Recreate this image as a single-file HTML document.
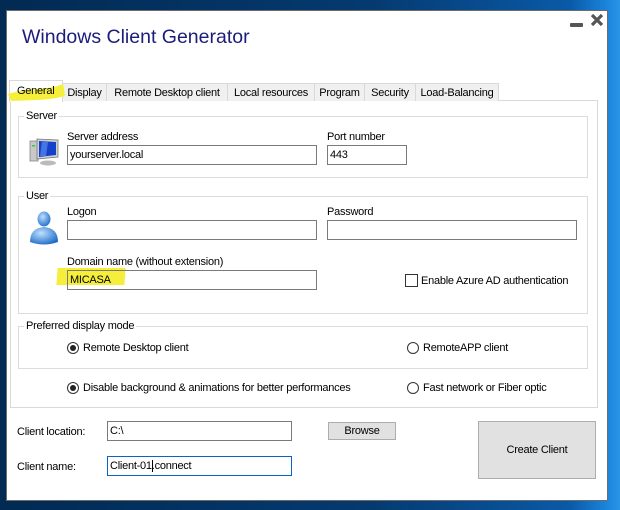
<!DOCTYPE html>
<html><head><meta charset="utf-8"><style>
*{margin:0;padding:0;box-sizing:border-box}
body{width:620px;height:510px;overflow:hidden;position:relative;font-family:"Liberation Sans",sans-serif;font-size:11px;letter-spacing:-0.25px;color:#000;
background:linear-gradient(90deg,#022a52 0%,#053a70 60%,#0a5aa8 92%,#1a86dc 98%,#2a94e6 100%);}
.a{position:absolute}
.win{left:6px;top:10px;width:602px;height:491px;background:#fff;border:1px solid #6b6b6b}
.title{left:22px;top:26px;font-size:19.5px;letter-spacing:0;color:#1c1c7a}
.tab{top:83px;height:18px;border:1px solid #d9d9d9;border-bottom:none;background:#f0f0f0;padding:3px 0 0 0;text-align:center}
.panel{left:10px;top:100px;width:588px;height:308px;border:1px solid #d9d9d9;background:#fff}
.grp{border:1px solid #dcdcdc}
.leg{background:#fff;padding:0 2px}
.inp{height:20px;border:1px solid #7a7a7a;background:#fff;padding:3px 2px}
.rad{width:12px;height:12px;border:1px solid #333;border-radius:50%;background:#fff}
.rad.on::after{content:"";position:absolute;left:2px;top:2px;width:6px;height:6px;border-radius:50%;background:#222}
.btn{background:#e1e1e1;border:1px solid #adadad;text-align:center}
</style></head><body>
<div class="a win"></div>
<div class="a title">Windows Client Generator</div>
<div class="a" style="left:570px;top:23px;width:13px;height:4px;background:#555;border-radius:1px"></div>
<svg class="a" style="left:590px;top:13px" width="14" height="14" viewBox="0 0 14 14"><path d="M2 2L12 12M12 2L2 12" stroke="#555" stroke-width="3.2"/></svg>

<div class="a panel"></div>
<div class="a tab" style="left:62px;width:45px">Display</div>
<div class="a tab" style="left:106px;width:122px">Remote Desktop client</div>
<div class="a tab" style="left:227px;width:88px">Local resources</div>
<div class="a tab" style="left:314px;width:51px">Program</div>
<div class="a tab" style="left:364px;width:52px">Security</div>
<div class="a tab" style="left:415px;width:84px">Load-Balancing</div>
<div class="a" style="left:9px;top:80px;width:54px;height:22px;background:#fff;border:1px solid #d9d9d9;border-bottom:none"></div>
<svg class="a" style="left:5px;top:80px" width="60" height="22"><path d="M3 14 Q20 9 32 9 Q48 8 58 4 L60 16 Q45 20 30 20 L6 21Z" fill="#f5ef3c"/></svg>
<div class="a" style="left:17px;top:85px">General</div>

<div class="a grp" style="left:18px;top:116px;width:570px;height:62px"></div>
<div class="a leg" style="left:24px;top:110px">Server</div>
<svg class="a" style="left:28px;top:137px" width="32" height="30" viewBox="0 0 32 30">
<rect x="2" y="4" width="8" height="20" fill="#c8c8c8" stroke="#888" stroke-width="0.8"/>
<rect x="4" y="8" width="3" height="1.5" fill="#3c3"/>
<path d="M9 2 L30 3 L30 20 L9 22Z" fill="#d0d0d0" stroke="#777" stroke-width="0.8"/>
<path d="M11 4 L28 5 L28 18 L11 20Z" fill="#1540c8"/>
<path d="M14 5 L20 5 L18 19 L12 19Z" fill="#5a8af0" opacity="0.7"/>
<ellipse cx="20" cy="26" rx="8" ry="2.5" fill="#bbb"/>
</svg>
<div class="a" style="left:67px;top:131px">Server address</div>
<div class="a inp" style="left:67px;top:145px;width:250px">yourserver.local</div>
<div class="a" style="left:327px;top:131px">Port number</div>
<div class="a inp" style="left:327px;top:145px;width:80px">443</div>

<div class="a grp" style="left:18px;top:196px;width:570px;height:118px"></div>
<div class="a leg" style="left:24px;top:190px">User</div>
<svg class="a" style="left:28px;top:210px" width="32" height="36" viewBox="0 0 32 36">
<defs><radialGradient id="g" cx="0.4" cy="0.35" r="0.7"><stop offset="0" stop-color="#bfe0ff"/><stop offset="1" stop-color="#1d6cc8"/></radialGradient></defs>
<ellipse cx="16" cy="9" rx="6.5" ry="7.5" fill="url(#g)"/>
<path d="M2 32 Q2 18 16 17 Q30 18 30 32 Q16 37 2 32Z" fill="url(#g)"/>
</svg>
<div class="a" style="left:67px;top:206px">Logon</div>
<div class="a inp" style="left:67px;top:220px;width:250px"></div>
<div class="a" style="left:327px;top:206px">Password</div>
<div class="a inp" style="left:327px;top:220px;width:250px"></div>
<div class="a" style="left:67px;top:256px">Domain name (without extension)</div>
<div class="a" style="left:57px;top:268px;width:68px;height:17px;background:#f5ef3c;transform:skewX(-4deg)"></div>
<div class="a inp" style="left:67px;top:270px;width:250px;background:transparent">MICASA</div>
<div class="a" style="left:405px;top:274px;width:13px;height:13px;border:1px solid #333;background:#fff"></div>
<div class="a" style="left:421px;top:275px">Enable Azure AD authentication</div>

<div class="a grp" style="left:18px;top:326px;width:570px;height:43px"></div>
<div class="a leg" style="left:24px;top:320px">Preferred display mode</div>
<div class="a rad on" style="left:67px;top:342px"></div>
<div class="a" style="left:83px;top:342px">Remote Desktop client</div>
<div class="a rad" style="left:407px;top:342px"></div>
<div class="a" style="left:423px;top:342px">RemoteAPP client</div>
<div class="a rad on" style="left:67px;top:382px"></div>
<div class="a" style="left:83px;top:382px">Disable background &amp; animations for better performances</div>
<div class="a rad" style="left:407px;top:382px"></div>
<div class="a" style="left:423px;top:382px">Fast network or Fiber optic</div>

<div class="a" style="left:17px;top:426px">Client location:</div>
<div class="a inp" style="left:107px;top:421px;width:185px">C:\</div>
<div class="a btn" style="left:328px;top:422px;width:68px;height:18px;padding-top:2px">Browse</div>
<div class="a btn" style="left:478px;top:421px;width:118px;height:58px;padding-top:22px">Create Client</div>
<div class="a" style="left:17px;top:461px">Client name:</div>
<div class="a inp" style="left:107px;top:456px;width:185px;border-color:#0a64c8">Client-01<span style="border-left:1px solid #000;margin-right:-1px"></span>.connect</div>
</body></html>
